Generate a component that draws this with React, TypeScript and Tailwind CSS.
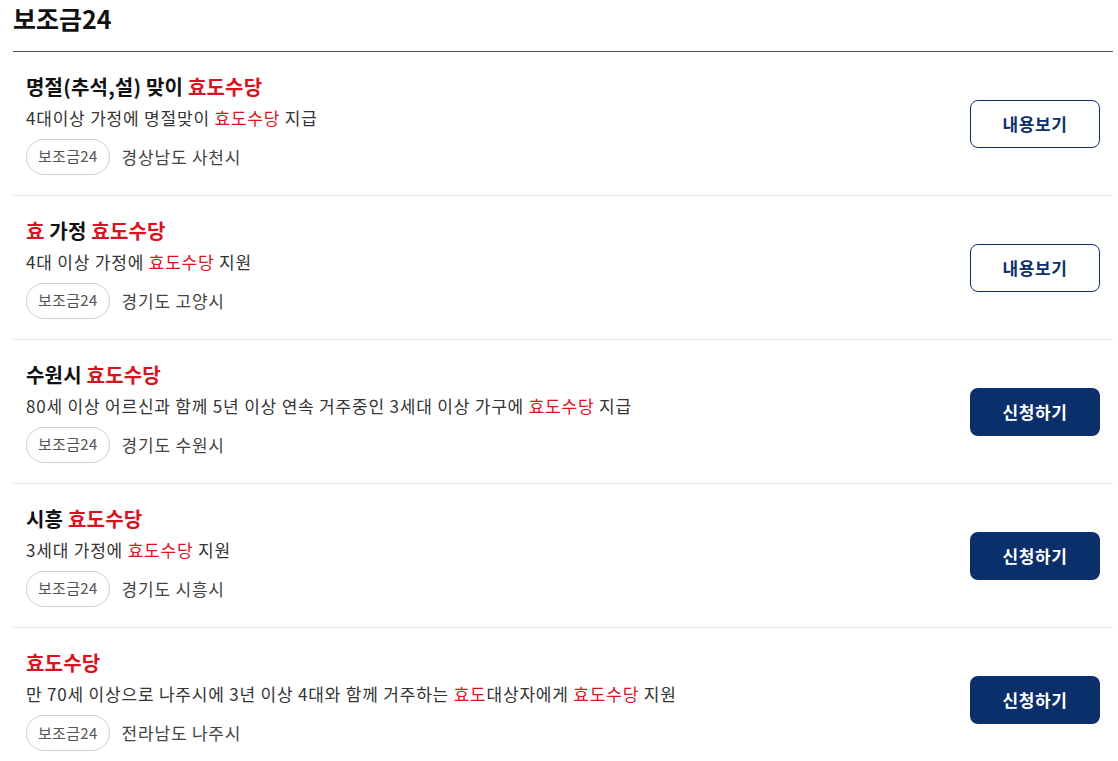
import React from 'react';

type Part = { t: string; red?: boolean };

type Item = {
    title: Part[];
    desc: Part[];
    region: string;
    action: 'view' | 'apply';
};

const items: Item[] = [
    {
        title: [{ t: '명절(추석,설) 맞이 ' }, { t: '효도수당', red: true }],
        desc: [{ t: '4대이상 가정에 명절맞이 ' }, { t: '효도수당', red: true }, { t: ' 지급' }],
        region: '경상남도 사천시',
        action: 'view',
    },
    {
        title: [{ t: '효', red: true }, { t: ' 가정 ' }, { t: '효도수당', red: true }],
        desc: [{ t: '4대 이상 가정에 ' }, { t: '효도수당', red: true }, { t: ' 지원' }],
        region: '경기도 고양시',
        action: 'view',
    },
    {
        title: [{ t: '수원시 ' }, { t: '효도수당', red: true }],
        desc: [
            { t: '80세 이상 어르신과 함께 5년 이상 연속 거주중인 3세대 이상 가구에 ' },
            { t: '효도수당', red: true },
            { t: ' 지급' },
        ],
        region: '경기도 수원시',
        action: 'apply',
    },
    {
        title: [{ t: '시흥 ' }, { t: '효도수당', red: true }],
        desc: [{ t: '3세대 가정에 ' }, { t: '효도수당', red: true }, { t: ' 지원' }],
        region: '경기도 시흥시',
        action: 'apply',
    },
    {
        title: [{ t: '효도수당', red: true }],
        desc: [
            { t: '만 70세 이상으로 나주시에 3년 이상 4대와 함께 거주하는 ' },
            { t: '효도', red: true },
            { t: '대상자에게 ' },
            { t: '효도수당', red: true },
            { t: ' 지원' },
        ],
        region: '전라남도 나주시',
        action: 'apply',
    },
];

const Text = ({ parts }: { parts: Part[] }) => (
    <>
        {parts.map((p, i) => (
            <span key={i} className={p.red ? 'text-[#d7141e]' : ''}>
                {p.t}
            </span>
        ))}
    </>
);

const App = () => {
    return (
        <div
            className="bg-white pl-[13px] pr-[5px] pt-[1px] min-h-screen"
            style={{ fontFamily: '"Noto Sans CJK KR", "Noto Sans", sans-serif' }}
        >
            <h1 className="text-[25px] leading-[34px] font-bold text-[#111]">보조금24</h1>
            <div className="mt-[16px] border-t border-[#555]">
                {items.map((item, i) => (
                    <div
                        key={i}
                        className={`flex items-center justify-between px-[13px] pt-5 pb-5 h-[144px] ${
                            i < items.length - 1 ? 'border-b border-[#e2e2e2]' : ''
                        }`}
                    >
                        <div className="flex flex-col">
                            <div className="text-[20px] leading-[28px] font-bold text-[#111] tracking-[0.2px]">
                                <Text parts={item.title} />
                            </div>
                            <div className="mt-[4px] text-[17px] leading-[26px] text-[#333] tracking-[0.8px]">
                                <Text parts={item.desc} />
                            </div>
                            <div className="mt-[8px] flex items-center gap-3">
                                <span className="h-[36px] px-[11px] flex items-center rounded-full border border-[#cfcfcf] text-[15px] text-[#555] tracking-[0.3px]">
                                    보조금24
                                </span>
                                <span className="text-[17px] text-[#444] tracking-[0.8px]">{item.region}</span>
                            </div>
                        </div>
                        {item.action === 'view' ? (
                            <button className="w-[130px] h-[48px] rounded-lg border border-[#0b2f6b] bg-white text-[#0b2f6b] text-[17px] font-bold tracking-[0.6px]">
                                내용보기
                            </button>
                        ) : (
                            <button className="w-[130px] h-[48px] rounded-lg bg-[#0b2f6b] text-white text-[17px] font-bold tracking-[0.6px]">
                                신청하기
                            </button>
                        )}
                    </div>
                ))}
            </div>
        </div>
    );
};

export default App;
